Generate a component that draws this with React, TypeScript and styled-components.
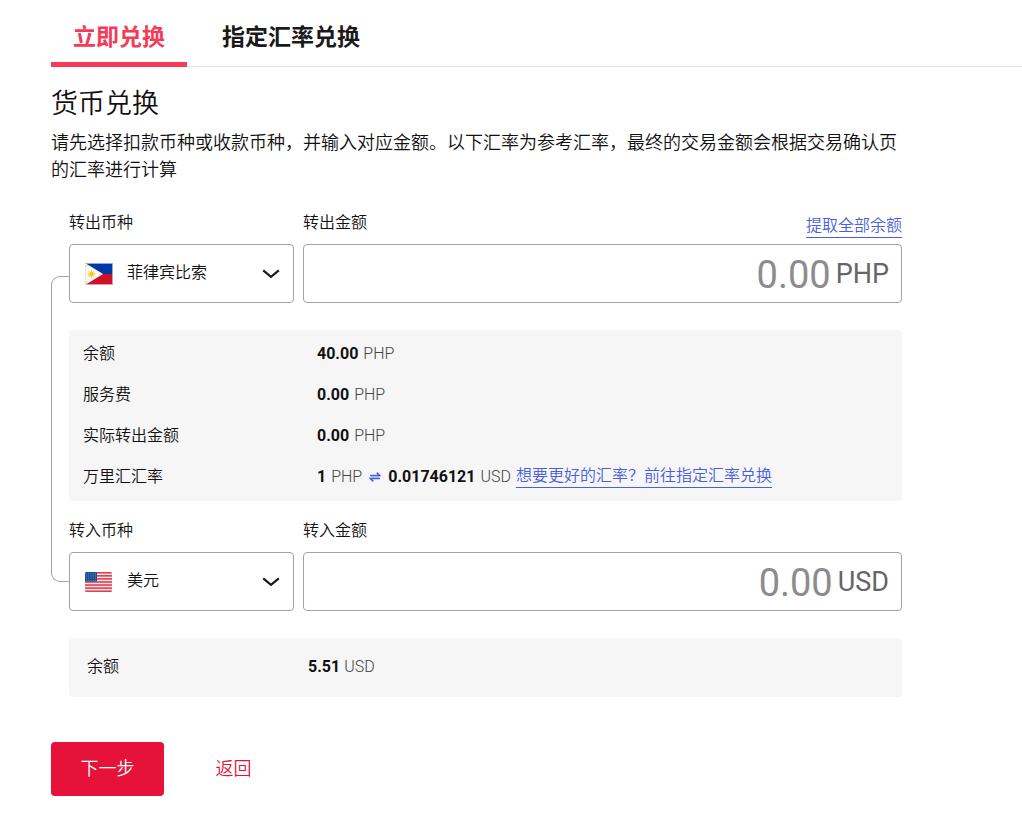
import React, { useState } from "react";
import styled, { createGlobalStyle, css } from "styled-components";

const GlobalStyle = createGlobalStyle`
  *, *::before, *::after { box-sizing: border-box; }
  body {
    margin: 0;
    background: #fff;
    color: #111;
    font-family: Roboto, "Noto Sans CJK SC", sans-serif;
    font-size: 16px;
    font-weight: 350;
    line-height: 24px;
  }
  button, input, select { font: inherit; color: inherit; }
`;

const Page = styled.main`
  padding: 0 0 32px 51px;
`;

const Tabs = styled.div`
  display: flex;
  gap: 13px;
  height: 67px;
  border-bottom: 1px solid #e3e3e3;
`;

const Tab = styled.button<{ $active: boolean }>`
  height: 67px;
  padding: 14px 22px 0;
  border: 0;
  border-bottom: 5px solid ${(p) => (p.$active ? "#f43b57" : "transparent")};
  background: none;
  color: ${(p) => (p.$active ? "#f43b57" : "#1a1a1a")};
  font-size: 23px;
  font-weight: 700;
  line-height: 32px;
  cursor: pointer;
`;

const Content = styled.form`
  width: 100%;
  max-width: 851px;
`;

const Title = styled.h1`
  margin: 19px 0 7px;
  font-size: 27px;
  font-weight: 350;
  line-height: 36px;
`;

const Description = styled.p`
  margin: 0 0 27px;
  font-size: 18px;
  line-height: 27px;
`;

const Exchange = styled.div`
  display: grid;
  grid-template-columns: 18px 1fr;
`;

const Connector = styled.div`
  margin: 66px 0 115px;
  border: 1px solid #a3a3a3;
  border-right: 0;
  border-radius: 9px 0 0 9px;
`;

const Sections = styled.div`
  display: flex;
  flex-direction: column;
`;

const FieldRow = styled.div`
  display: grid;
  grid-template-columns: 225px 1fr;
  gap: 9px;
  margin-bottom: 27px;
`;

const FieldHead = styled.div`
  display: flex;
  justify-content: space-between;
  height: 34px;
  line-height: 26px;
`;

const linkStyle = css`
  color: #4a5fe0;
  text-decoration: none;
  border-bottom: 1px solid #4a5fe0;
  line-height: 22px;
`;

const TextLink = styled.a`
  ${linkStyle}
  display: inline-block;
`;

const HeadLink = styled.a`
  ${linkStyle}
  align-self: flex-end;
  margin-bottom: 6px;
`;

const Control = styled.div`
  display: flex;
  align-items: center;
  height: 59px;
  padding: 0 13px 0 15px;
  border: 1px solid #a3a3a3;
  border-radius: 4px;
  background: #fff;
`;

const CurrencySelect = styled.select`
  flex: 1;
  min-width: 0;
  height: 57px;
  margin: 0 -31px 0 0;
  padding: 0 31px 1px 14px;
  border: 0;
  outline: 0;
  appearance: none;
  background: none;
  cursor: pointer;
`;

const Chevron = styled.svg`
  flex: none;
  margin-left: 13px;
  pointer-events: none;
`;

const AmountControl = styled(Control)`
  padding: 0 12px;
`;

const AmountInput = styled.input`
  flex: 1;
  min-width: 0;
  height: 57px;
  padding: 2px 0 0;
  border: 0;
  outline: 0;
  background: none;
  font-size: 38px;
  font-weight: 400;
  text-align: right;
  &::placeholder { color: #8c8c8c; opacity: 1; }
`;

const AmountUnit = styled.span`
  margin-left: 5px;
  color: #666;
  font-size: 27px;
  font-weight: 400;
`;

const Panel = styled.dl<{ $compact?: boolean }>`
  display: flex;
  flex-direction: column;
  gap: 14px;
  margin: 0 0 ${(p) => (p.$compact ? 0 : 17)}px;
  padding: ${(p) => (p.$compact ? "15px 18px 17px" : "10px 14px 11px")};
  border-radius: 4px;
  background: #f6f6f6;
`;

const PanelRow = styled.div<{ $label: number }>`
  display: grid;
  grid-template-columns: ${(p) => p.$label}px 1fr;
  line-height: 27px;
`;

const Term = styled.dt``;

const Detail = styled.dd<{ $gap: number }>`
  display: flex;
  align-items: center;
  gap: ${(p) => p.$gap}px;
  margin: 0;
`;

const Value = styled.strong`
  font-weight: 700;
`;

const Unit = styled.span`
  color: #444;
`;

const Actions = styled.div`
  display: flex;
  gap: 13px;
  margin-top: 45px;
`;

const NextButton = styled.button`
  min-width: 113px;
  height: 54px;
  padding: 0 24px;
  border: 0;
  border-radius: 4px;
  background: #e61239;
  color: #fff;
  font-size: 18px;
  cursor: pointer;
`;

const BackButton = styled(NextButton)`
  background: none;
  color: #e61239;
`;

function PhilippinesFlag() {
  return (
    <svg width="28" height="22" viewBox="0 0 28 22" aria-hidden="true">
      <rect width="28" height="11" fill="#0038a8" />
      <rect y="11" width="28" height="11" fill="#ce1126" />
      <path d="M0 0 18 11 0 22Z" fill="#fff" />
      <path
        d="M6.5 6.6v8.8M2.1 11h8.8M3.4 7.9l6.2 6.2M9.6 7.9l-6.2 6.2"
        stroke="#fcd116"
        strokeWidth="1"
      />
      <circle cx="6.5" cy="11" r="2.2" fill="#fcc419" />
      <circle cx="1.7" cy="3" r="0.8" fill="#fcd116" />
      <circle cx="1.7" cy="19" r="0.8" fill="#fcd116" />
      <circle cx="14.8" cy="11" r="0.8" fill="#fcd116" />
      <rect x="0.5" y="0.5" width="27" height="21" fill="none" stroke="#d9d9e2" strokeOpacity="0.7" />
    </svg>
  );
}

function UnitedStatesFlag() {
  const stripes = [0, 1, 2, 3, 4, 5, 6];
  const stars = [0, 1, 2, 3, 4];
  return (
    <svg width="28" height="20" viewBox="0 0 28 20" aria-hidden="true">
      <clipPath id="us-shape">
        <rect width="27" height="20" rx="1.5" />
      </clipPath>
      <g clipPath="url(#us-shape)">
        <rect width="28" height="20" fill="#f7e6e9" />
        {stripes.map((i) => (
          <rect key={i} y={i * 3.07} width="28" height="1.54" fill="#dc3a4d" />
        ))}
        <rect width="12" height="9.5" fill="#1c4f94" />
        {stars.map((row) =>
          stars.map((col) => (
            <circle key={`${row}-${col}`} cx={1.4 + col * 2.3} cy={1.2 + row * 1.8} r="0.4" fill="#a9c3e6" />
          ))
        )}
      </g>
    </svg>
  );
}

function ChevronIcon() {
  return (
    <Chevron width="18" height="10" viewBox="0 0 18 10" aria-hidden="true">
      <path d="M1.2 1.4 9 7.8 16.8 1.4" fill="none" stroke="#1a1a1a" strokeWidth="2.2" />
    </Chevron>
  );
}

function SwapIcon() {
  return (
    <svg width="16" height="12" viewBox="0 0 16 12" aria-hidden="true">
      <path d="M4 4.5h8.5v3H4z" fill="#c5cdf6" />
      <path d="M3 4.5h9.6L9.8 1.6M13 7.5H3.4l2.8 2.9" fill="none" stroke="#4a5fe0" strokeWidth="1.6" />
    </svg>
  );
}

type ExchangeFieldProps = {
  id: string;
  currencyLabel: string;
  amountLabel: string;
  currency: string;
  unit: string;
  flag: React.ReactNode;
  action?: React.ReactNode;
};

function ExchangeField({ id, currencyLabel, amountLabel, currency, unit, flag, action }: ExchangeFieldProps) {
  return (
    <FieldRow>
      <div>
        <FieldHead>
          <label htmlFor={`${id}-currency`}>{currencyLabel}</label>
        </FieldHead>
        <Control>
          {flag}
          <CurrencySelect id={`${id}-currency`}>
            <option>{currency}</option>
          </CurrencySelect>
          <ChevronIcon />
        </Control>
      </div>
      <div>
        <FieldHead>
          <label htmlFor={`${id}-amount`}>{amountLabel}</label>
          {action}
        </FieldHead>
        <AmountControl>
          <AmountInput id={`${id}-amount`} inputMode="decimal" placeholder="0.00" />
          <AmountUnit>{unit}</AmountUnit>
        </AmountControl>
      </div>
    </FieldRow>
  );
}

const summary = [
  { label: "余额", value: "40.00" },
  { label: "服务费", value: "0.00" },
  { label: "实际转出金额", value: "0.00" },
];

const tabs = ["立即兑换", "指定汇率兑换"];

export default function App() {
  const [active, setActive] = useState(0);

  return (
    <>
      <GlobalStyle />
      <Page lang="zh-CN">
        <Tabs role="tablist">
          {tabs.map((name, i) => (
            <Tab key={name} type="button" role="tab" aria-selected={active === i} $active={active === i} onClick={() => setActive(i)}>
              {name}
            </Tab>
          ))}
        </Tabs>
        <Content onSubmit={(e) => e.preventDefault()}>
          <Title>货币兑换</Title>
          <Description>
            请先选择扣款币种或收款币种，并输入对应金额。以下汇率为参考汇率，最终的交易金额会根据交易确认页的汇率进行计算
          </Description>
          <Exchange>
            <Connector />
            <Sections>
              <ExchangeField
                id="from"
                currencyLabel="转出币种"
                amountLabel="转出金额"
                currency="菲律宾比索"
                unit="PHP"
                flag={<PhilippinesFlag />}
                action={<HeadLink href="#all">提取全部余额</HeadLink>}
              />
              <Panel>
                {summary.map((row) => (
                  <PanelRow key={row.label} $label={234}>
                    <Term>{row.label}</Term>
                    <Detail $gap={5}>
                      <Value>{row.value}</Value>
                      <Unit>PHP</Unit>
                    </Detail>
                  </PanelRow>
                ))}
                <PanelRow $label={234}>
                  <Term>万里汇汇率</Term>
                  <Detail $gap={5}>
                    <Value>1</Value>
                    <Unit>PHP</Unit>
                    <SwapIcon />
                    <Value>0.01746121</Value>
                    <Unit>USD</Unit>
                    <TextLink href="#rate">想要更好的汇率？前往指定汇率兑换</TextLink>
                  </Detail>
                </PanelRow>
              </Panel>
              <ExchangeField
                id="to"
                currencyLabel="转入币种"
                amountLabel="转入金额"
                currency="美元"
                unit="USD"
                flag={<UnitedStatesFlag />}
              />
              <Panel $compact>
                <PanelRow $label={221}>
                  <Term>余额</Term>
                  <Detail $gap={4}>
                    <Value>5.51</Value>
                    <Unit>USD</Unit>
                  </Detail>
                </PanelRow>
              </Panel>
            </Sections>
          </Exchange>
          <Actions>
            <NextButton type="submit">下一步</NextButton>
            <BackButton type="button">返回</BackButton>
          </Actions>
        </Content>
      </Page>
    </>
  );
}
